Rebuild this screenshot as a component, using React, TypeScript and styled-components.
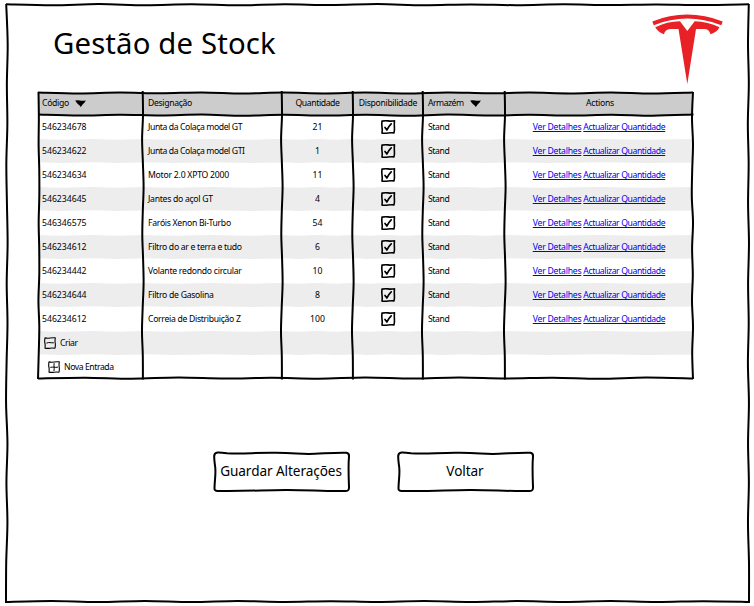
import React from "react";
import styled, { createGlobalStyle, css } from "styled-components";

const GlobalStyle = createGlobalStyle`
  html, body { margin: 0; padding: 0; background: #fff; }
  body { font-family: "Noto Sans", sans-serif; color: #000; }
  *, *::before { box-sizing: border-box; }
`;

type Point = [number, number];

/* Smooth curve through the given points (Catmull-Rom as cubic Béziers). */
function curve(points: Point[]): string {
  let d = `M${points[0][0]} ${points[0][1]}`;
  for (let i = 0; i < points.length - 1; i++) {
    const a = points[Math.max(0, i - 1)];
    const b = points[i];
    const c = points[i + 1];
    const e = points[Math.min(points.length - 1, i + 2)];
    d += `C${b[0] + (c[0] - a[0]) / 6} ${b[1] + (c[1] - a[1]) / 6} ${c[0] - (e[0] - b[0]) / 6} ${c[1] - (e[1] - b[1]) / 6} ${c[0]} ${c[1]}`;
  }
  return d;
}

/* A hand-drawn stroke: the offsets push evenly spaced points off the straight line. */
function stroke(from: Point, to: Point, offsets: number[]): string {
  const horizontal = Math.abs(to[0] - from[0]) > Math.abs(to[1] - from[1]);
  return curve(
    offsets.map((o, i) => {
      const t = i / (offsets.length - 1);
      const x = from[0] + (to[0] - from[0]) * t;
      const y = from[1] + (to[1] - from[1]) * t;
      return (horizontal ? [x, y + o] : [x + o, y]) as Point;
    })
  );
}

const Page = styled.main`
  position: relative;
  width: 754px;
  height: 606px;
  overflow: hidden;
  padding: 14px 31px 0 38px;
  background: #fff;
`;

const Sketch = styled.svg`
  position: absolute;
  inset: 0;
  width: 100%;
  height: 100%;
  overflow: visible;
  pointer-events: none;
  fill: none;
  stroke: #000;
  stroke-width: 2;
  stroke-linejoin: round;
`;

const Header = styled.header`
  display: flex;
  justify-content: space-between;
  height: 79px;
`;

const Title = styled.h1`
  margin: 9px 0 0 15px;
  font-size: 29.33px;
  font-weight: 400;
  line-height: 40px;
  letter-spacing: 0.14px;
  white-space: nowrap;
`;

const Logo = styled.svg`
  width: 71px;
  height: 71px;
  fill: #e82127;
`;

const Table = styled.div`
  position: relative;
  width: 655px;
  height: 286px;
  font-size: 8.67px;
  line-height: 12px;
`;

const Row = styled.div<{ $head?: boolean }>`
  display: grid;
  grid-template-columns: 105px 139px 71px 70px 82px 188px;
  height: ${(p) => (p.$head ? 22 : 24)}px;
  ${(p) =>
    p.$head &&
    css`
      background: #ccc;
      margin-right: 1px;
      padding-bottom: 2px;
    `}
`;

const Cell = styled.div<{ $center?: boolean; $stripe?: boolean; $gap?: number; $indent?: number }>`
  display: flex;
  align-items: center;
  justify-content: ${(p) => (p.$center ? "center" : "flex-start")};
  gap: ${(p) => p.$gap ?? 0}px;
  padding-left: ${(p) => p.$indent ?? 0}px;
  white-space: nowrap;
  ${(p) =>
    p.$stripe &&
    css`
      background: #ededed;
      clip-path: polygon(0 0, 12% 2%, 25% 3%, 38% 1%, 52% 0, 65% 2%, 78% 3%, 90% 1%, 100% 0, 100% 98%, 88% 99%, 75% 100%, 60% 98%, 48% 97%, 35% 99%, 22% 100%, 10% 98%, 0 97%);
    `}
`;

const Label = styled.span<{ $track?: number }>`
  letter-spacing: ${(p) => p.$track ?? -0.3}px;
`;

const Link = styled.a<{ $track: number }>`
  color: #0000ee;
  text-decoration: underline;
  letter-spacing: ${(p) => p.$track}px;
`;

const Icon = styled.svg<{ $size: number }>`
  flex: none;
  width: ${(p) => p.$size}px;
  height: ${(p) => p.$size}px;
  fill: none;
  stroke: #000;
  stroke-linejoin: round;
  stroke-linecap: round;
`;

const Arrow = styled.svg`
  width: 11px;
  height: 7px;
  margin-left: 6px;
`;

const Actions = styled.div`
  display: flex;
  gap: 48px;
  margin: 74px 0 0 176px;
`;

const Button = styled.button`
  position: relative;
  width: 136px;
  height: 38px;
  padding: 0 2px 2px 0;
  border: 0;
  background: none;
  color: #000;
  font: 400 13.6px/18px "Noto Sans", sans-serif;
  letter-spacing: -0.08px;
  white-space: nowrap;
`;

const SortArrow = () => (
  <Arrow viewBox="0 0 11 7" aria-hidden="true">
    <path d="M.2.5Q3 -.1 5 .5T10.9.4Q9.6 2.6 8 4.1L5.8 7Q4.8 5.4 3.1 4.3Q1.4 2.4.2.5Z" />
  </Arrow>
);

const Check = () => (
  <Icon $size={16} viewBox="0 0 16 16" role="img" aria-label="Sim">
    <path strokeWidth="1.6" d="M2 2.1Q5 1.5 8 1.9T14.5 1.8Q14.1 5 14.4 8T14 13.9Q11 13.6 8 14T2 14.1Q2.5 10.5 2 8T2 2.1Z" />
    <path strokeWidth="1.7" d="M5 8.4L6.9 11Q8.4 7.6 11.2 4.9" />
  </Icon>
);

const Toggle = ({ open }: { open?: boolean }) => (
  <Icon $size={12} viewBox="0 0 12 12" aria-hidden="true">
    <path strokeWidth="1.1" d="M1 .9Q3.5 1.4 6 1T11.3.8Q10.8 3.5 11.2 6T11 11.2Q8 10.8 6 11.2T1 11.1Q1.4 8 .9 6T1 .9Z" />
    <path strokeWidth="1" d={open ? "M2.8 6Q4.4 5.3 6 5.6T9.4 5.8" : "M2.7 6.3Q4.4 5.9 6 6.2T9.6 6.2M6.1 2.6Q5.8 4.4 6.1 6T6 9.6"} />
  </Icon>
);

const ButtonFrame = () => (
  <Sketch viewBox="0 0 136 38" aria-hidden="true">
    <path d="M3.5-.5Q6-.7 13 .3C31 1.5 40-.7 62-.3S87 1.5 101 .8S122-.6 132.4-.3Q135.3.2 135 3.5C134.2 12 134.6 24 135 34Q135.2 38 132 38C109 38.5 96 36.8 72 36.9S35 38.5 4 38Q.2 38.2.5 35C.8 25 2 21 1.2 14Q.2 7 .2 3.5Q.1-.1 3.5-.5Z" />
  </Sketch>
);

interface Item {
  code: string;
  name: string;
  quantity: string;
  track: number;
}

const stock: Item[] = [
  { code: "546234678", name: "Junta da Colaça model GT", quantity: "21", track: -0.41 },
  { code: "546234622", name: "Junta da Colaça model GTI", quantity: "1", track: -0.41 },
  { code: "546234634", name: "Motor 2.0 XPTO 2000", quantity: "11", track: -0.24 },
  { code: "546234645", name: "Jantes do açol GT", quantity: "4", track: -0.29 },
  { code: "546346575", name: "Faróis Xenon Bi-Turbo", quantity: "54", track: -0.29 },
  { code: "546234612", name: "Filtro do ar e terra e tudo", quantity: "6", track: -0.3 },
  { code: "546234442", name: "Volante redondo circular", quantity: "10", track: -0.26 },
  { code: "546234644", name: "Filtro de Gasolina", quantity: "8", track: -0.28 },
  { code: "546234612", name: "Correia de Distribuição Z", quantity: "100", track: -0.31 },
];

const columnOffsets = [0, 0.3, -0.6, 0.2, 0.9, 0.1, -0.4, 0.4, 0.9, 0, -0.7, 0.1, 0.2];
const rowOffsets = [0, 1, 0.1, 0.9, 0, 1.1, 0.2, 1, 0.2, 1.1, 0, 0.9, 0.2, 1, 0.1, 1.1, 0];
const frameOffsets = [0, 1, -0.2, 0.9, 0, 1, 0, 0.8, -0.2, 1, 0.1, 0.9, 0, 0.7, 0.2, 0.8, 0];

export default function App() {
  return (
    <>
      <GlobalStyle />
      <Page>
        <Sketch viewBox="0 0 754 606" aria-hidden="true">
          <path d={stroke([6, 4.3], [749, 4.3], frameOffsets)} />
          <path d={stroke([6.2, 4], [6, 602.5], [0, 1.5, 0.7, 1.2, 0.2, 0.8, 1.5, 0.6, 1.4, 0.5, 0, 1.4, 0.4, 1.4, 0.2, 0])} />
          <path d={stroke([748.8, 4], [749, 602.5], [0, -0.8, 0, -1, -0.2, -0.8, 0.1, -0.8, -0.2, -1, 0, -0.9, -0.1, -1, 0, 0])} />
          <path d={stroke([5, 602], [750, 602], [0, -1, 0, -1.1, 0, -1, -0.1, -0.8, 0, -1, 0, -0.9, 0, -1, 0, -0.8, 0])} />
        </Sketch>
        <Header>
          <Title>Gestão de Stock</Title>
          <Logo viewBox="0 0 71 71" role="img" aria-label="Tesla">
            <path d="M.3 7.5Q35-6.3 70.7 7.5L69.3 11.2Q35-2 1.8 11.2Z" />
            <path d="M3.3 13.2Q15 7.3 28 7.2L35.3 17L42.7 7.2Q56 7.5 67.5 13.2Q65 18.2 58.5 20.3Q57 15.1 52.5 15H44L35.3 70L26.5 15H18.2Q13 15.3 12 20.3Q5.5 17.7 3.3 13.2Z" />
          </Logo>
        </Header>
        <Table>
          <Row $head>
            <Cell $indent={4}><Label $track={-0.33}>Código</Label><SortArrow /></Cell>
            <Cell $indent={5}><Label $track={-0.35}>Designação</Label></Cell>
            <Cell $center><Label $track={-0.4}>Quantidade</Label></Cell>
            <Cell $center><Label $track={-0.33}>Disponibilidade</Label></Cell>
            <Cell $indent={5}><Label $track={-0.5}>Armazém</Label><SortArrow /></Cell>
            <Cell $center $indent={2}><Label $track={-0.28}>Actions</Label></Cell>
          </Row>
          {stock.map(({ code, name, quantity, track }, i) => {
            const stripe = i % 2 === 1;
            return (
              <Row key={i}>
                <Cell $stripe={stripe} $indent={4}><Label $track={0}>{code}</Label></Cell>
                <Cell $stripe={stripe} $indent={5}><Label $track={track}>{name}</Label></Cell>
                <Cell $stripe={stripe} $center><Label $track={0}>{quantity}</Label></Cell>
                <Cell $stripe={stripe} $center><Check /></Cell>
                <Cell $stripe={stripe} $indent={5}><Label $track={-0.4}>Stand</Label></Cell>
                <Cell $stripe={stripe} $center $gap={2}>
                  <Link $track={-0.25}>Ver Detalhes</Link>
                  <Link $track={-0.4}>Actualizar Quantidade</Link>
                </Cell>
              </Row>
            );
          })}
          <Row>
            <Cell $stripe $indent={6} $gap={4}><Toggle open /><Label $track={-0.4}>Criar</Label></Cell>
            {[0, 1, 2, 3, 4].map((n) => <Cell key={n} $stripe />)}
          </Row>
          <Row>
            <Cell $indent={10} $gap={4}><Toggle /><Label $track={-0.44}>Nova Entrada</Label></Cell>
          </Row>
          <Sketch viewBox="0 0 655 286" aria-hidden="true">
            <path d={stroke([0, -0.6], [655, -0.6], rowOffsets)} />
            <path d={stroke([0, 21.6], [655.5, 21.6], rowOffsets)} />
            <path d={stroke([0, 285.5], [655, 285.5], [0, -0.8, 0.2, -1, 0, -0.7, 0.2, -1, 0.1, -1, 0, -0.8, 0.2, -0.9, 0])} />
            <path d={stroke([0.5, -1], [0, 286], [0, 0.4, 0.2, 0.9, 1, 0.4, 1, 1.1, 0.3, 1.2, 0.7, 0])} />
            {[104.7, 243.7, 314.7, 384.7, 466.7].map((x) => (
              <path key={x} d={stroke([x, -2], [x, 286.5], columnOffsets)} />
            ))}
            <path d={stroke([655, -1], [655, 286], [0, -1, 0, -0.8, -1.2, 0, -0.9, -0.2, -1, 0, -0.8, 0])} />
          </Sketch>
        </Table>
        <Actions>
          <Button type="button"><ButtonFrame />Guardar Alterações</Button>
          <Button type="button"><ButtonFrame />Voltar</Button>
        </Actions>
      </Page>
    </>
  );
}
